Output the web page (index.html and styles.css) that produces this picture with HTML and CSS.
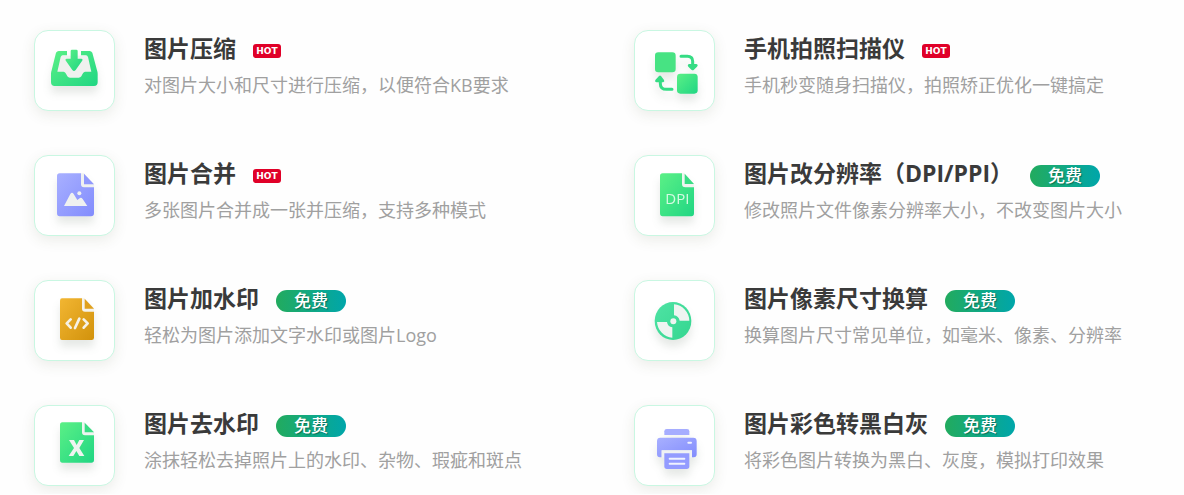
FILE: index.html
```html
<!DOCTYPE html>
<html lang="zh-CN">
<head>
<meta charset="utf-8">
<title>图片工具</title>
<link rel="stylesheet" href="styles.css">
</head>
<body>
<svg class="defs" aria-hidden="true">
  <defs>
    <linearGradient id="green" x1="0" y1="0" x2="1" y2="1"><stop offset="0" stop-color="#5bf086"/><stop offset="1" stop-color="#20d683"/></linearGradient>
    <linearGradient id="blue" x1="0" y1="0" x2="1" y2="1"><stop offset="0" stop-color="#a8b0ff"/><stop offset="1" stop-color="#828cfd"/></linearGradient>
    <linearGradient id="gold" x1="0" y1="0" x2="1" y2="1"><stop offset="0" stop-color="#f2b632"/><stop offset="1" stop-color="#d2920c"/></linearGradient>
    <linearGradient id="mint" x1="0" y1="0" x2="1" y2="1"><stop offset="0" stop-color="#4fe3a4"/><stop offset="1" stop-color="#34d690"/></linearGradient>
  </defs>
</svg>
<main class="tools">
  <a class="tool" href="#compress">
    <span class="tile"><svg class="icon" viewBox="45 48 237 237" aria-hidden="true">
      <path fill="#eff1ef" d="M123 122H203L214 168 190 196H138L111 168Z"/>
      <path fill="url(#green)" d="M116 108H141V121H128Q124 121 122 126L112 170H131Q136 171 138 176L142 184Q145 188 150 188H176Q181 188 184 184L188 176Q190 171 195 170H214L204 126Q202 121 198 121H183V108H209Q214 108 217 113L231 166Q233 171 233 176V202Q233 213 222 213H104Q93 213 93 202V176Q93 171 95 166L108 113Q111 108 116 108Z"/>
      <path fill="url(#green)" d="M152 108Q152 104 156 104H169Q173 104 173 108V131H184Q190 132 186 138L167 165Q162 171 157 165L138 138Q134 132 140 131H152Z"/>
    </svg></span>
    <span class="copy"><strong class="title">图片压缩<span class="hot">HOT</span></strong><span class="desc">对图片大小和尺寸进行压缩，以便符合KB要求</span></span>
  </a>
  <a class="tool" href="#scanner">
    <span class="tile"><svg class="icon" viewBox="45 48 237 237" aria-hidden="true">
      <rect x="105" y="112" width="62" height="60" rx="10" fill="#47e383"/>
      <rect x="171" y="176" width="62" height="60" rx="10" fill="url(#green)"/>
      <path d="M183 124H202Q218 124 218 139V149M156 223H140Q121 223 121 206V199" fill="none" stroke="#35dc84" stroke-width="9" stroke-linecap="round"/>
      <path fill="#35dc84" d="M207 147H229Q236 149 231 155L221 165Q218 167 215 165L205 155Q201 149 207 147ZM109 202Q103 200 106 195L117 183Q120 180 123 183L132 195Q135 200 129 202Z"/>
    </svg></span>
    <span class="copy"><strong class="title">手机拍照扫描仪<span class="hot">HOT</span></strong><span class="desc">手机秒变随身扫描仪，拍照矫正优化一键搞定</span></span>
  </a>
  <a class="tool" href="#merge">
    <span class="tile"><svg class="icon" viewBox="45 48 237 237" aria-hidden="true">
      <path fill="#eff1f0" d="M183 100H192L222 133V142H183Z"/>
      <path fill="url(#blue)" d="M119 100H183V133Q183 142 192 142H222V220Q222 229 213 229H119Q111 229 111 220V108Q111 100 119 100Z"/>
      <path fill="#9199fd" d="M192 101 222 133H192Z"/>
      <path fill="#eff1f0" d="M132 198 151 162Q156 155 161 162L172 180 180 174Q184 171 188 177L202 198Z"/><circle cx="178" cy="160" r="6" fill="#eff1f0"/>
    </svg></span>
    <span class="copy"><strong class="title">图片合并<span class="hot">HOT</span></strong><span class="desc">多张图片合并成一张并压缩，支持多种模式</span></span>
  </a>
  <a class="tool" href="#dpi">
    <span class="tile"><svg class="icon" viewBox="45 48 237 237" aria-hidden="true">
      <path fill="#eff4f0" d="M186 100H194L222 132V142H186Z"/>
      <path fill="url(#green)" d="M128 100H186V132Q186 142 196 142H222V220Q222 229 214 229H128Q120 229 120 220V108Q120 100 128 100Z"/>
      <path fill="#38dd84" d="M194 101 222 132H194Z"/>
      <text class="dpi" x="172" y="191">DPI</text>
    </svg></span>
    <span class="copy"><strong class="title">图片改分辨率（DPI/PPI）<span class="free">免费</span></strong><span class="desc">修改照片文件像素分辨率大小，不改变图片大小</span></span>
  </a>
  <a class="tool" href="#watermark">
    <span class="tile"><svg class="icon" viewBox="45 48 237 237" aria-hidden="true">
      <path fill="#f5f3ed" d="M186 100H194L222 130V140H186Z"/>
      <path fill="url(#gold)" d="M126 100H186V131Q186 140 195 140H222V218Q222 225 215 225H126Q120 225 120 218V107Q120 100 126 100Z"/>
      <path fill="#e0a11d" d="M194 101 222 131H194Z"/>
      <path d="M152 163 140 175 152 188M191 163 203 175 191 188M178 161 165 189" fill="none" stroke="#f6f2e6" stroke-width="8" stroke-linecap="round" stroke-linejoin="round"/>
    </svg></span>
    <span class="copy"><strong class="title">图片加水印<span class="free">免费</span></strong><span class="desc">轻松为图片添加文字水印或图片Logo</span></span>
  </a>
  <a class="tool" href="#convert">
    <span class="tile"><svg class="icon" viewBox="45 48 237 237" aria-hidden="true">
      <ellipse cx="159" cy="168" rx="55" ry="57" fill="url(#mint)"/>
      <path fill="#eff4f1" d="M162 118A49 51 0 0 1 208 167H179A20 20 0 0 0 162 151ZM111 171H141A19 19 0 0 0 157 187V218A49 51 0 0 1 111 171Z"/>
      <circle cx="160" cy="169" r="9" fill="#eff4f1"/>
    </svg></span>
    <span class="copy"><strong class="title">图片像素尺寸换算<span class="free">免费</span></strong><span class="desc">换算图片尺寸常见单位，如毫米、像素、分辨率</span></span>
  </a>
  <a class="tool" href="#erase">
    <span class="tile"><svg class="icon" viewBox="45 48 237 237" aria-hidden="true">
      <path fill="#eff4f0" d="M186 97H194L222 127V136H186Z"/>
      <path fill="url(#green)" d="M127 97H186V127Q186 136 195 136H222V210Q222 218 214 218H127Q120 218 120 210V105Q120 97 127 97Z"/>
      <path fill="#38dd84" d="M194 98 222 127H194Z"/>
      <path fill="#eff4f0" d="M147 150H162L170 165 178 150H192L178 174 193 198H178L169 183 160 198H146L162 174Z"/>
    </svg></span>
    <span class="copy"><strong class="title">图片去水印<span class="free">免费</span></strong><span class="desc">涂抹轻松去掉照片上的水印、杂物、瑕疵和斑点</span></span>
  </a>
  <a class="tool" href="#grayscale">
    <span class="tile"><svg class="icon" viewBox="45 48 237 237" aria-hidden="true">
      <path fill="#a6adff" d="M140 117H201Q208 117 208 124V135H133V124Q133 117 140 117Z"/>
      <path fill="url(#blue)" d="M121 143H220Q230 143 230 153V193Q230 202 221 202H216V181H125V202H120Q111 202 111 193V153Q111 143 121 143Z"/>
      <path fill="#eff1f4" d="M125 181H216V203H125Z"/>
      <path fill="#939bff" d="M133 190H208V229Q208 237 200 237H141Q133 237 133 229Z"/>
      <path d="M149 206H193M149 221H193M205 158H213" fill="none" stroke="#f0f2ff" stroke-width="6" stroke-linecap="round"/>
    </svg></span>
    <span class="copy"><strong class="title">图片彩色转黑白灰<span class="free">免费</span></strong><span class="desc">将彩色图片转换为黑白、灰度，模拟打印效果</span></span>
  </a>
</main>
</body>
</html>
```
FILE: styles.css
```css
* { box-sizing: border-box; }
body {
  margin: 0;
  background: #fefefe;
  font-family: "Open Sans", "Noto Sans CJK SC", sans-serif;
}
.defs { position: absolute; width: 0; height: 0; }
.tools {
  display: grid;
  grid-template-columns: 1fr 1fr;
  gap: 44px 50px;
  padding: 30px 0 8px 34px;
}
.tool {
  display: flex;
  gap: 29px;
  color: #3a3a3a;
  text-decoration: none;
}
.tile {
  flex: none;
  width: 81px;
  height: 81px;
  border: 1px solid #c9f7e2;
  border-radius: 14px;
  background: #fff;
  box-shadow: 0 4px 14px rgba(70, 75, 40, 0.1);
}
.icon {
  display: block;
  width: 100%;
  height: 100%;
  filter: drop-shadow(0 7px 4px rgba(50, 70, 50, 0.12));
}
.dpi {
  font-size: 45px;
  fill: #d5fae2;
  text-anchor: middle;
}
.copy { display: flex; flex-direction: column; }
.title {
  display: flex;
  align-items: center;
  font-size: 23px;
  line-height: 36px;
  font-weight: 700;
  white-space: nowrap;
}
.desc {
  color: #a0a0a0;
  font-size: 18px;
  line-height: 38px;
  font-weight: 400;
  white-space: nowrap;
}
.hot, .free {
  flex: none;
  margin: 5px 0 0 17px;
  color: #fff;
  text-align: center;
}
.hot {
  width: 28px;
  height: 14px;
  border-radius: 3px;
  background: #e00028;
  font-family: "DejaVu Sans", sans-serif;
  font-size: 9px;
  font-weight: 700;
  line-height: 14px;
}
.free {
  width: 70px;
  height: 22px;
  border-radius: 11px;
  background: linear-gradient(90deg, #22ab5e, #00a6aa);
  font-size: 17px;
  font-weight: 500;
  line-height: 22px;
  text-shadow: 1px 1px 1px rgba(0, 60, 40, 0.5);
}
```
